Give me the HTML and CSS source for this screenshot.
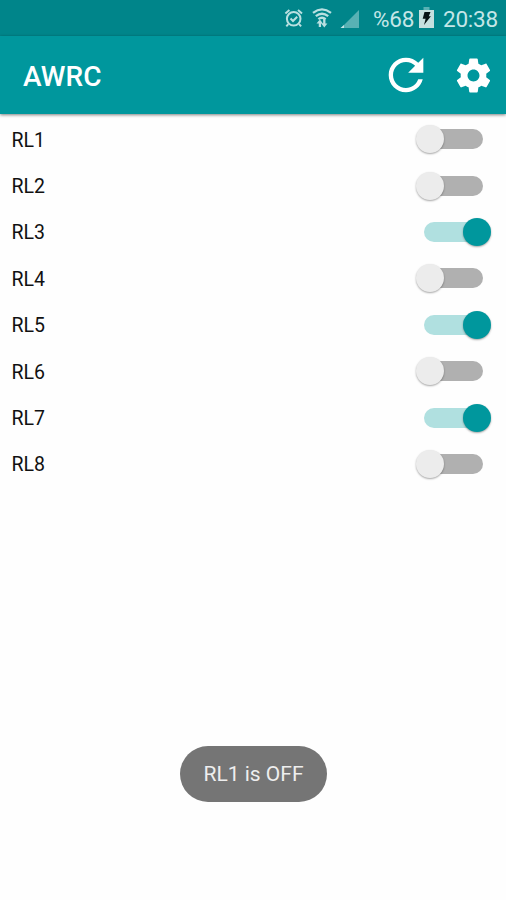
FILE: index.html
```html
<!DOCTYPE html>
<html lang="en">
<head>
    <meta charset="UTF-8">
    <meta name="viewport" content="width=device-width, initial-scale=1.0">
    <title>AWRC</title>
    <link rel="stylesheet" href="styles.css">
</head>
<body>
    <div class="status-bar">
        <svg class="alarm" width="20" height="20" viewBox="0 0 20 20" fill="none" stroke="#b9e0e1" stroke-width="2">
            <circle cx="9.7" cy="10.8" r="6.8"/>
            <path d="M6.5 10.5l2.5 2.5 4.2-4.2M1.4 5.5l4-3.4M18 5.5l-4-3.4M4.3 16.1l-2 2.2M15.1 16.1l2 2.2"/>
        </svg>
        <svg class="wifi" width="20" height="20" viewBox="0 0 20 20" fill="none" stroke="#b9e0e1" stroke-width="2.3">
            <path d="M1 4.8Q10 -2 19 4.8M3.8 8.2Q10 3.2 16.2 8.2M6.4 11.2Q10 8.2 13.6 11.2"/>
            <path d="M7.9 19v-6M12.3 11v6"/>
            <path d="M4.5 15.6l3.4-4 3 4zM9.2 15.4l3.1 4 3.1-4z" fill="#b9e0e1" stroke="none"/>
        </svg>
        <svg class="signal" width="20" height="20" viewBox="0 0 20 20">
            <path d="M19 1v18H1z" fill="#58b1b4"/>
            <path d="M4 16v3H0.5z" fill="#c5e6e7"/>
        </svg>
        <span class="percent">%68</span>
        <svg class="battery" width="15" height="21" viewBox="0 0 15 21">
            <path d="M4.5 0h6v3h-6z" fill="#58b1b4"/>
            <path d="M0 3h15v18H0z" fill="#c5e0df"/>
            <path d="M5.5 5h6L9.8 9.3h2.1L5 18l1.6-6.2H3.7z" fill="#061416"/>
        </svg>
        <span class="clock">20:38</span>
    </div>

    <div class="app-bar">
        <h1>AWRC</h1>
        <svg class="refresh" width="52" height="52" viewBox="0 0 24 24" fill="#fff">
            <path d="M17.65 6.35C16.2 4.9 14.21 4 12 4c-4.42 0-7.99 3.58-7.99 8s3.57 8 7.99 8c3.73 0 6.84-2.55 7.73-6h-2.08c-.82 2.33-3.04 4-5.65 4-3.31 0-6-2.69-6-6s2.69-6 6-6c1.66 0 3.14.69 4.22 1.78L13 11h7V4l-2.35 2.35z"/>
        </svg>
        <svg class="settings" width="41" height="41" viewBox="0 0 24 24" fill="#fff">
            <path d="M19.43 12.98c.04-.32.07-.64.07-.98s-.03-.66-.07-.98l2.11-1.65c.19-.15.24-.42.12-.64l-2-3.46c-.12-.22-.39-.3-.61-.22l-2.49 1c-.52-.4-1.08-.73-1.69-.98l-.38-2.65C14.46 2.18 14.25 2 14 2h-4c-.25 0-.46.18-.49.42l-.38 2.65c-.61.25-1.17.59-1.69.98l-2.49-1c-.23-.09-.49 0-.61.22l-2 3.46c-.13.22-.07.49.12.64l2.11 1.65c-.04.32-.07.65-.07.98s.03.66.07.98l-2.11 1.65c-.19.15-.24.42-.12.64l2 3.46c.12.22.39.3.61.22l2.49-1c.52.4 1.08.73 1.69.98l.38 2.65c.03.24.24.42.49.42h4c.25 0 .46-.18.49-.42l.38-2.65c.61-.25 1.17-.59 1.69-.98l2.49 1c.23.09.49 0 .61-.22l2-3.46c.12-.22.07-.49-.12-.64l-2.11-1.65zM12 15.5c-1.93 0-3.5-1.57-3.5-3.5s1.57-3.5 3.5-3.5 3.5 1.57 3.5 3.5-1.57 3.5-3.5 3.5z"/>
        </svg>
    </div>

    <div class="relays">
        <div class="relay"><span>RL1</span><div class="switch"><div class="thumb"></div></div></div>
        <div class="relay"><span>RL2</span><div class="switch"><div class="thumb"></div></div></div>
        <div class="relay"><span>RL3</span><div class="switch on"><div class="thumb"></div></div></div>
        <div class="relay"><span>RL4</span><div class="switch"><div class="thumb"></div></div></div>
        <div class="relay"><span>RL5</span><div class="switch on"><div class="thumb"></div></div></div>
        <div class="relay"><span>RL6</span><div class="switch"><div class="thumb"></div></div></div>
        <div class="relay"><span>RL7</span><div class="switch on"><div class="thumb"></div></div></div>
        <div class="relay"><span>RL8</span><div class="switch"><div class="thumb"></div></div></div>
    </div>

    <div class="toast">RL1 is OFF</div>
</body>
</html>
```
FILE: styles.css
```css
* { box-sizing: border-box; }
body { margin: 0; height: 900px; background: #fefefe; font-family: Roboto, sans-serif; color: #111; overflow: hidden; }

.status-bar { display: flex; align-items: center; height: 36px; padding: 0 8px 0 284px; background: #00858a; color: #c5e6e7; font-size: 22.5px; white-space: nowrap; }
.status-bar svg { flex: none; }
.wifi { margin-left: 8px; }
.signal { margin-left: 8px; margin-top: 1px; }
.percent { width: 41px; margin-left: 13px; padding-top: 1px; letter-spacing: -0.2px; }
.battery { margin-left: 5px; margin-bottom: 2px; }
.clock { margin-left: auto; padding-top: 1px; letter-spacing: -0.2px; }

.app-bar { display: flex; align-items: center; height: 78px; padding: 0 12.5px 0 23px; background: #00979d; color: #fff; box-shadow: 0 1px 3px rgba(0, 0, 0, 0.5); }
.app-bar h1 { margin: 2px auto 0 0; font-size: 28px; font-weight: 500; letter-spacing: 0.1px; }
.settings { margin-left: 21px; }

.relays { padding: 2px 15.5px 0 11.5px; }
.relay { display: flex; align-items: center; justify-content: space-between; height: 46.4px; font-size: 19.5px; }
.relay span { padding-top: 2px; }

.switch { display: flex; align-items: center; width: 58.5px; height: 20px; margin-right: 8px; border-radius: 10px; background: #b0b0b0; }
.thumb { flex: none; width: 28px; height: 28px; margin-left: -8.5px; border-radius: 50%; background: #ececec; box-shadow: 0 1px 2px rgba(0, 0, 0, 0.35); }
.switch.on { justify-content: flex-end; background: #b0e0e0; }
.switch.on .thumb { margin: 0 -8px 0 0; background: #00979d; }

.toast { position: absolute; left: 180px; top: 746px; width: 147px; height: 56px; border-radius: 28px; background: #757575; color: #eee; font-size: 21px; line-height: 56px; text-align: center; }
```
